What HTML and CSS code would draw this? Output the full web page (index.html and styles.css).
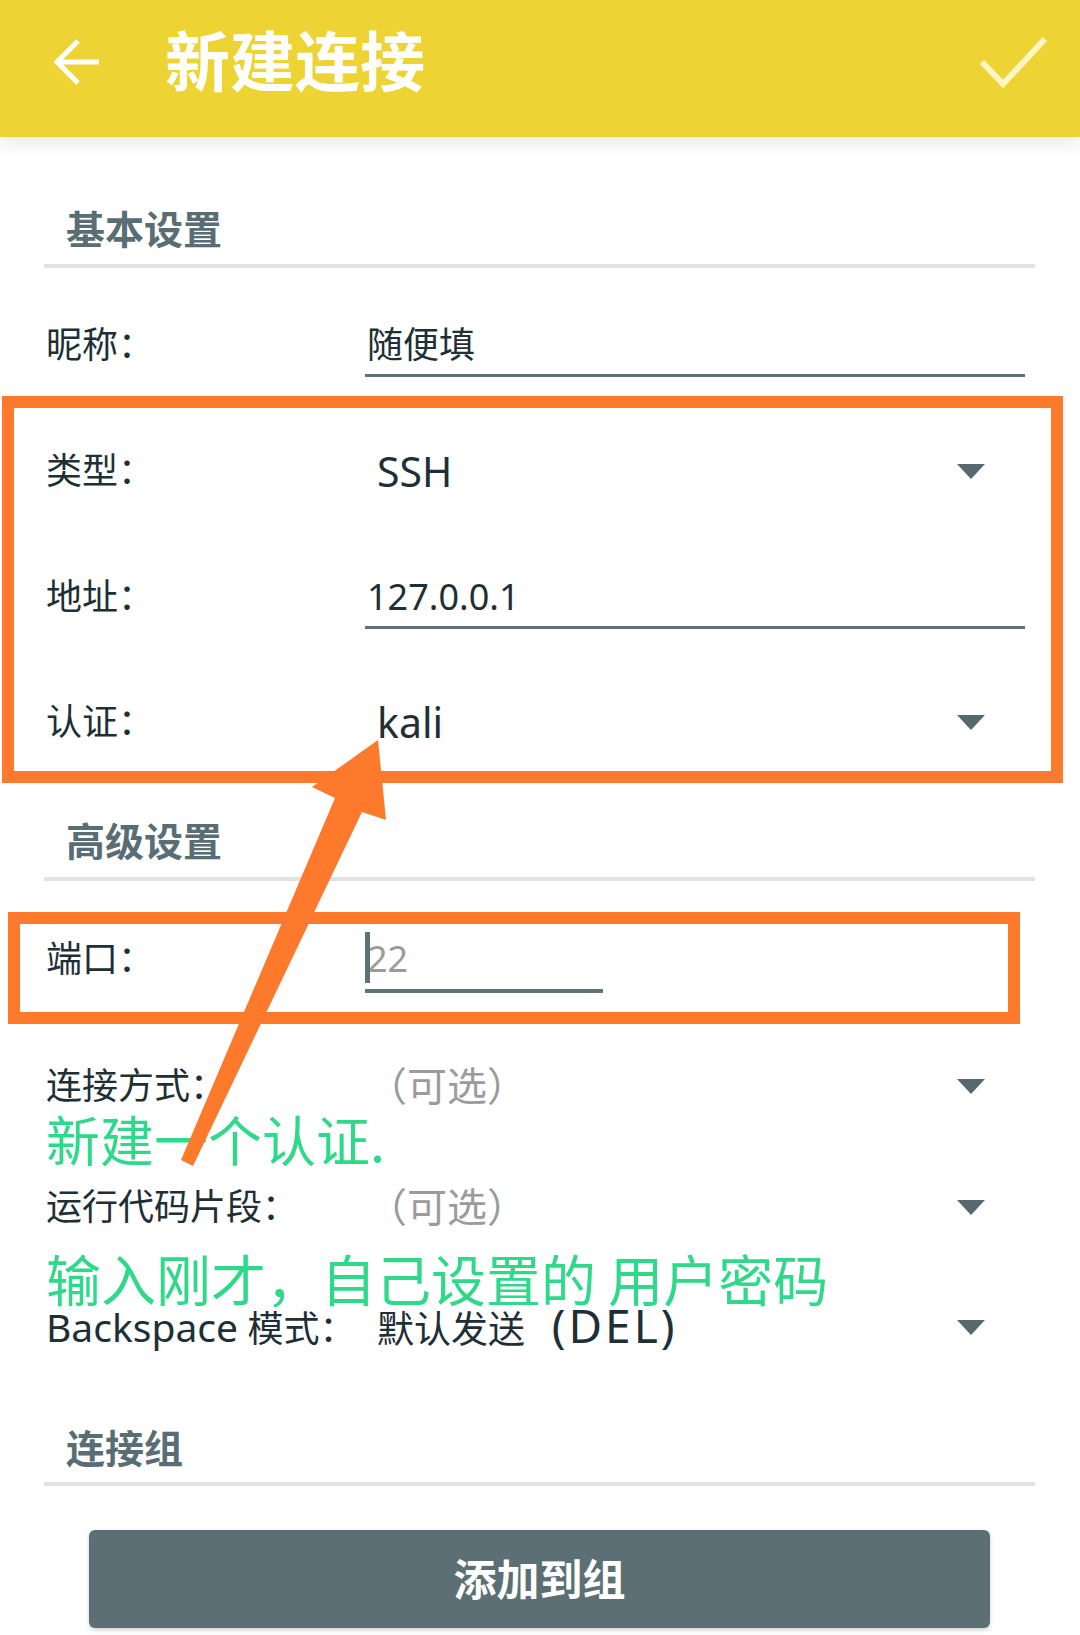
FILE: index.html
```html
<!DOCTYPE html>
<html lang="zh-CN">
<head>
<meta charset="utf-8">
<title>新建连接</title>
<link rel="stylesheet" href="styles.css">
</head>
<body>
<div class="page">
  <header class="appbar">
    <svg class="appbar-back" width="52" height="52" viewBox="0 0 52 52" aria-hidden="true">
      <path d="M27 5 L6 26 L27 47 M6 26 H48" fill="none" stroke="#ffffff" stroke-width="5"/>
    </svg>
    <h1 class="appbar-title">新建连接</h1>
    <svg class="appbar-done" width="72" height="56" viewBox="0 0 72 56" aria-hidden="true">
      <path d="M4 28 L25 50 L67 5" fill="none" stroke="#fff6c6" stroke-width="6"/>
    </svg>
  </header>

  <main class="form">
    <div class="group group--basic">
      <h2 class="group-title">基本设置</h2>
      <div class="divider"></div>
    </div>

    <div class="row row--nick">
      <span class="label">昵称：</span>
      <div class="field field--edit">随便填</div>
    </div>

    <div class="row row--type">
      <span class="label">类型：</span>
      <div class="field field--spinner"><span class="spinner-value">SSH</span><span class="caret"></span></div>
    </div>

    <div class="row row--addr">
      <span class="label">地址：</span>
      <div class="field field--edit">127.0.0.1</div>
    </div>

    <div class="row row--auth">
      <span class="label">认证：</span>
      <div class="field field--spinner"><span class="spinner-value">kali</span><span class="caret"></span></div>
    </div>

    <div class="group group--advanced">
      <h2 class="group-title">高级设置</h2>
      <div class="divider"></div>
    </div>

    <div class="row row--port">
      <span class="label">端口：</span>
      <div class="field field--port"><span class="cursor"></span><span class="hint">22</span></div>
    </div>

    <div class="row row--conn">
      <span class="label">连接方式：</span>
      <div class="field field--spinner"><span class="spinner-value spinner-value--hint">（可选）</span><span class="caret"></span></div>
    </div>

    <div class="row row--snippet">
      <span class="label">运行代码片段：</span>
      <div class="field field--spinner"><span class="spinner-value spinner-value--hint">（可选）</span><span class="caret"></span></div>
    </div>

    <div class="row row--backspace">
      <span class="label"><span class="latin">Backspace</span> 模式：</span>
      <div class="field field--spinner"><span class="spinner-value"><span class="cjk">默认发送</span> <span class="key">(DEL)</span></span><span class="caret"></span></div>
    </div>

    <div class="group group--conn">
      <h2 class="group-title">连接组</h2>
      <div class="divider"></div>
    </div>

    <button class="btn-add" type="button">添加到组</button>
  </main>

  <div class="mark-box mark-box--main"></div>
  <div class="mark-box mark-box--port"></div>
  <p class="note note--auth">新建一个认证.</p>
  <p class="note note--pass">输入刚才，自己设置的 用户密码</p>
  <svg class="mark-arrow" width="1080" height="1635" viewBox="0 0 1080 1635" aria-hidden="true">
    <polygon points="181,1160 335,798 312,787 378,740 386,820 362,812 193,1166" fill="#fd792b"/>
  </svg>
</div>
</body>
</html>
```

FILE: styles.css
```css
* {
  box-sizing: border-box;
}

html, body {
  margin: 0;
  padding: 0;
  background: #ffffff;
}

.page {
  position: relative;
  width: 1080px;
  height: 1635px;
  overflow: hidden;
  background: #ffffff;
  font-family: "Noto Sans", "Noto Sans CJK SC", sans-serif;
  color: #1e2f35;
}

/* ---------- app bar ---------- */
.appbar {
  position: relative;
  z-index: 2;
  height: 137px;
  display: flex;
  align-items: center;
  padding: 0 30px 14px 51px;
  background: #eed335;
  box-shadow: 0 5px 18px rgba(0, 0, 0, 0.10);
}

.appbar-back {
  flex: none;
  display: block;
}

.appbar-title {
  margin: -8px 0 0 62px;
  flex: 1;
  font-family: "Noto Sans CJK SC", sans-serif;
  font-size: 65px;
  font-weight: 700;
  line-height: 80px;
  color: #ffffff;
}

.appbar-done {
  flex: none;
  display: block;
}

/* ---------- form ---------- */
.form {
  padding: 0 45px 0 44px;
}

.group-title {
  margin: 0 0 0 22px;
  font-family: "Noto Sans CJK SC", sans-serif;
  font-size: 39px;
  font-weight: 700;
  line-height: 44px;
  color: #596d74;
}

.divider {
  height: 4px;
  background: #e2e2e2;
}

.group--basic { padding-top: 68px; }
.group--basic .divider { margin-top: 15px; }

.group--advanced { margin-top: 73px; }
.group--advanced .divider { margin-top: 16px; }

.group--conn { margin-top: 73px; }
.group--conn .divider { margin-top: 14px; }

.row {
  display: flex;
  align-items: flex-start;
}

.label {
  flex: none;
  width: 321px;
  padding-left: 2px;
  font-size: 36px;
  line-height: 44px;
  white-space: nowrap;
}

.latin {
  font-size: 39px;
}

.field {
  width: 660px;
  font-size: 36px;
  line-height: 44px;
}

.field--edit {
  padding: 0 0 7px 2px;
  border-bottom: 3px solid #5d7278;
}

.field--spinner {
  display: flex;
  align-items: center;
  justify-content: space-between;
  height: 44px;
  padding: 0 40px 0 12px;
}

.spinner-value {
  font-size: 41px;
  white-space: nowrap;
}

.spinner-value--hint {
  margin-left: -10px;
  font-size: 40px;
  color: #9b9b9b;
}

.cjk {
  font-size: 37px;
}

.key {
  margin-left: 16px;
  font-size: 46px;
  letter-spacing: 3px;
}

.caret {
  flex: none;
  width: 0;
  height: 0;
  border-left: 14px solid transparent;
  border-right: 14px solid transparent;
  border-top: 15px solid #56696f;
}

.field--port {
  position: relative;
  width: 238px;
  padding: 0 0 8px 2px;
  border-bottom: 4px solid #5d7278;
}

.cursor {
  position: absolute;
  left: 0;
  top: -5px;
  width: 5px;
  height: 51px;
  background: #5d7278;
}

.hint {
  color: #9b9b9b;
}

.row--nick { margin-top: 55px; }
.row--type { margin-top: 72px; }
.row--addr { margin-top: 82px; }
.row--auth { margin-top: 71px; }
.row--port { margin-top: 56px; }
.row--conn { margin-top: 71px; }
.row--snippet { margin-top: 77px; }
.row--backspace { margin-top: 76px; }

.btn-add {
  display: block;
  width: 901px;
  height: 98px;
  margin: 44px 0 0 45px;
  padding: 0 0 4px;
  border: none;
  border-radius: 6px;
  background: #5b6f75;
  box-shadow: 0 2px 4px rgba(0, 0, 0, 0.18);
  font-family: "Noto Sans CJK SC", sans-serif;
  font-size: 43px;
  font-weight: 700;
  color: #ffffff;
}

/* ---------- annotations ---------- */
.mark-box {
  position: absolute;
  border: 12px solid #fd792b;
  z-index: 3;
}

.mark-box--main {
  left: 2px;
  top: 396px;
  width: 1061px;
  height: 387px;
}

.mark-box--port {
  left: 8px;
  top: 912px;
  width: 1012px;
  height: 112px;
}

.note {
  position: absolute;
  left: 46px;
  margin: 0;
  font-family: "Noto Sans CJK SC", sans-serif;
  font-weight: 400;
  color: #30d98a;
  white-space: nowrap;
  z-index: 3;
}

.note--auth {
  top: 1112px;
  font-size: 54px;
  line-height: 54px;
}

.note--pass {
  top: 1250px;
  font-size: 55px;
  line-height: 54px;
}

.mark-arrow {
  position: absolute;
  left: 0;
  top: 0;
  z-index: 4;
  pointer-events: none;
}
```
